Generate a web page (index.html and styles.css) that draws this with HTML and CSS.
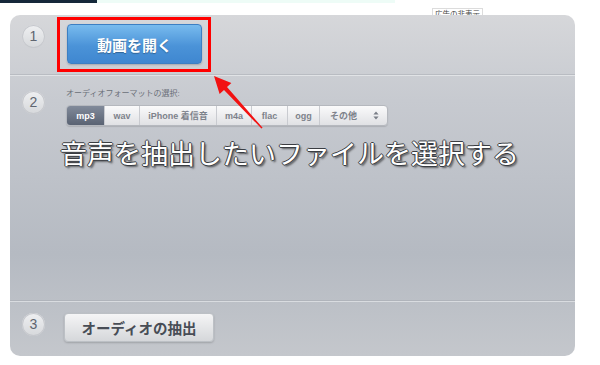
FILE: index.html
```html
<!DOCTYPE html>
<html lang="ja">
<head>
    <meta charset="UTF-8">
    <meta name="viewport" content="width=device-width, initial-scale=1.0">
    <title>動画から音声を抽出</title>
    <link rel="stylesheet" href="styles.css">
</head>
<body>
    <div class="topbar">
        <div class="topbar-dark"></div>
        <div class="topbar-light"></div>
    </div>
    <div class="ad-row">
        <span class="ad-label">広告の非表示</span>
    </div>
    <div class="panel">
        <div class="step step-open">
            <div class="num">1</div>
            <div class="highlight">
                <button class="btn-open">動画を開く</button>
            </div>
        </div>
        <div class="step step-format">
            <div class="num">2</div>
            <div class="format-col">
                <div class="format-label">オーディオフォーマットの選択:</div>
                <div class="segments">
                    <span class="seg seg-mp3 active">mp3</span>
                    <span class="seg seg-wav">wav</span>
                    <span class="seg seg-iphone">iPhone 着信音</span>
                    <span class="seg seg-m4a">m4a</span>
                    <span class="seg seg-flac">flac</span>
                    <span class="seg seg-ogg">ogg</span>
                    <span class="seg seg-other">その他
                        <svg class="updown" width="6" height="9" viewBox="0 0 6 9">
                            <path d="M3 0.5 L5.6 3.6 H0.4 Z M3 8.5 L5.6 5.4 H0.4 Z" fill="#7a7f88"/>
                        </svg>
                    </span>
                </div>
                <div class="caption">音声を抽出したいファイルを選択する</div>
            </div>
        </div>
        <div class="step step-extract">
            <div class="num">3</div>
            <button class="btn-extract">オーディオの抽出</button>
        </div>
        <!-- annotation arrow -->
        <svg class="arrow" width="565" height="341" viewBox="0 0 565 341">
            <polygon points="204,61 221.4,68.1 217,72.1 252.6,112.7 251.4,113.5 214,74.9 209.6,78.9" fill="#f21111"/>
        </svg>
    </div>
</body>
</html>
```

FILE: styles.css
```css
body {
    margin: 0;
    background: #ffffff;
    font-family: "Liberation Sans", "Noto Sans CJK JP", sans-serif;
    width: 600px;
    height: 365px;
    overflow: hidden;
}

.topbar {
    display: flex;
    height: 3px;
}

.topbar-dark {
    width: 97px;
    background: #15283a;
}

.topbar-light {
    width: 298px;
    background: #eefcf7;
}

.ad-row {
    height: 12px;
    padding-left: 432px;
}

.ad-label {
    display: inline-block;
    margin-top: 3px;
    padding: 0 2px;
    font-family: "Noto Sans CJK JP", sans-serif;
    font-size: 7.5px;
    line-height: 9px;
    color: #444;
    border: 1px solid #dcdcdc;
    border-bottom: none;
}

.panel {
    position: relative;
    margin-left: 10px;
    width: 565px;
    height: 341px;
    border-radius: 10px;
    overflow: hidden;
    background: linear-gradient(#d6d7da, #c7cad0 25%, #b5bac2 70%, #c4c7cc);
}

.step {
    display: flex;
    align-items: flex-start;
    padding-left: 12px;
    box-sizing: border-box;
}

.step-open {
    height: 60px;
    border-bottom: 1px solid #b9bcc2;
}

.step-format {
    height: 226px;
    border-top: 1px solid #e1e3e6;
    border-bottom: 1px solid #b0b4bb;
}

.step-extract {
    height: 55px;
    border-top: 1px solid #d9dce0;
}

.num {
    flex-shrink: 0;
    width: 23px;
    height: 23px;
    border-radius: 50%;
    background: linear-gradient(#eff0f2, #d6d8db);
    box-shadow: inset 0 0 0 1px #c6c8cd;
    color: #606570;
    font-size: 14px;
    line-height: 23px;
    text-align: center;
}

.step-open .num {
    margin-top: 10px;
}

.highlight {
    margin: 2px 0 0 12px;
    padding: 4px 6px 5px 7px;
    border: 3px solid #ff0000;
}

.btn-open {
    display: block;
    width: 135px;
    height: 40px;
    border: 1px solid #3c7fc3;
    border-radius: 4px;
    background: linear-gradient(#78bbee, #4b93d8 55%, #3f87d0);
    color: #ffffff;
    font-family: "Liberation Sans", "Noto Sans CJK JP", sans-serif;
    font-size: 15px;
    font-weight: bold;
    text-shadow: 0 1px 1px rgba(0, 0, 0, 0.3);
    box-shadow: 0 1px 2px rgba(0, 0, 0, 0.2);
}

.step-format .num {
    margin-top: 15px;
}

.format-col {
    margin-left: 21px;
}

.format-label {
    margin-top: 13px;
    font-size: 8px;
    line-height: 10px;
    color: #6a6f78;
}

.segments {
    display: flex;
    margin-top: 6px;
    height: 21px;
    width: 322px;
    border: 1px solid #b5b8be;
    border-radius: 4px;
    overflow: hidden;
    box-sizing: border-box;
    background: linear-gradient(#fafafb, #e0e1e4);
    box-shadow: 0 1px 1px rgba(0, 0, 0, 0.12);
}

.seg {
    display: flex;
    align-items: center;
    justify-content: center;
    font-size: 9px;
    font-weight: bold;
    color: #7d828b;
    border-left: 1px solid #c9cbd0;
}

.seg-mp3 { width: 37px; border-left: none; }
.seg-wav { width: 34px; }
.seg-iphone { width: 76px; }
.seg-m4a { width: 34px; }
.seg-flac { width: 35px; }
.seg-ogg { width: 31px; }

.seg-other {
    flex: 1;
    justify-content: space-between;
    padding: 0 8px 0 10px;
}

.seg.active {
    background: linear-gradient(#818a9a, #5a6373);
    color: #ffffff;
}

.caption {
    margin: 10px 0 0 -6px;
    font-family: "Noto Sans CJK JP", sans-serif;
    font-size: 27px;
    line-height: 34px;
    color: #ffffff;
    white-space: nowrap;
    text-shadow: 1px 0 0 #3a3d42, -1px 0 0 #3a3d42, 0 1px 0 #3a3d42, 0 -1px 0 #3a3d42,
        2px 2px 2px rgba(0, 0, 0, 0.55);
}

.step-extract .num {
    margin-top: 11px;
}

.btn-extract {
    margin: 11px 0 0 19px;
    width: 150px;
    height: 29px;
    border: 1px solid #bcc0c5;
    border-radius: 4px;
    background: linear-gradient(#f5f5f6, #d5d7da);
    color: #484d56;
    font-family: "Liberation Sans", "Noto Sans CJK JP", sans-serif;
    font-size: 14.5px;
    font-weight: bold;
    box-shadow: 0 1px 2px rgba(0, 0, 0, 0.18);
}

.arrow {
    position: absolute;
    top: 0;
    left: 0;
    pointer-events: none;
}
```
